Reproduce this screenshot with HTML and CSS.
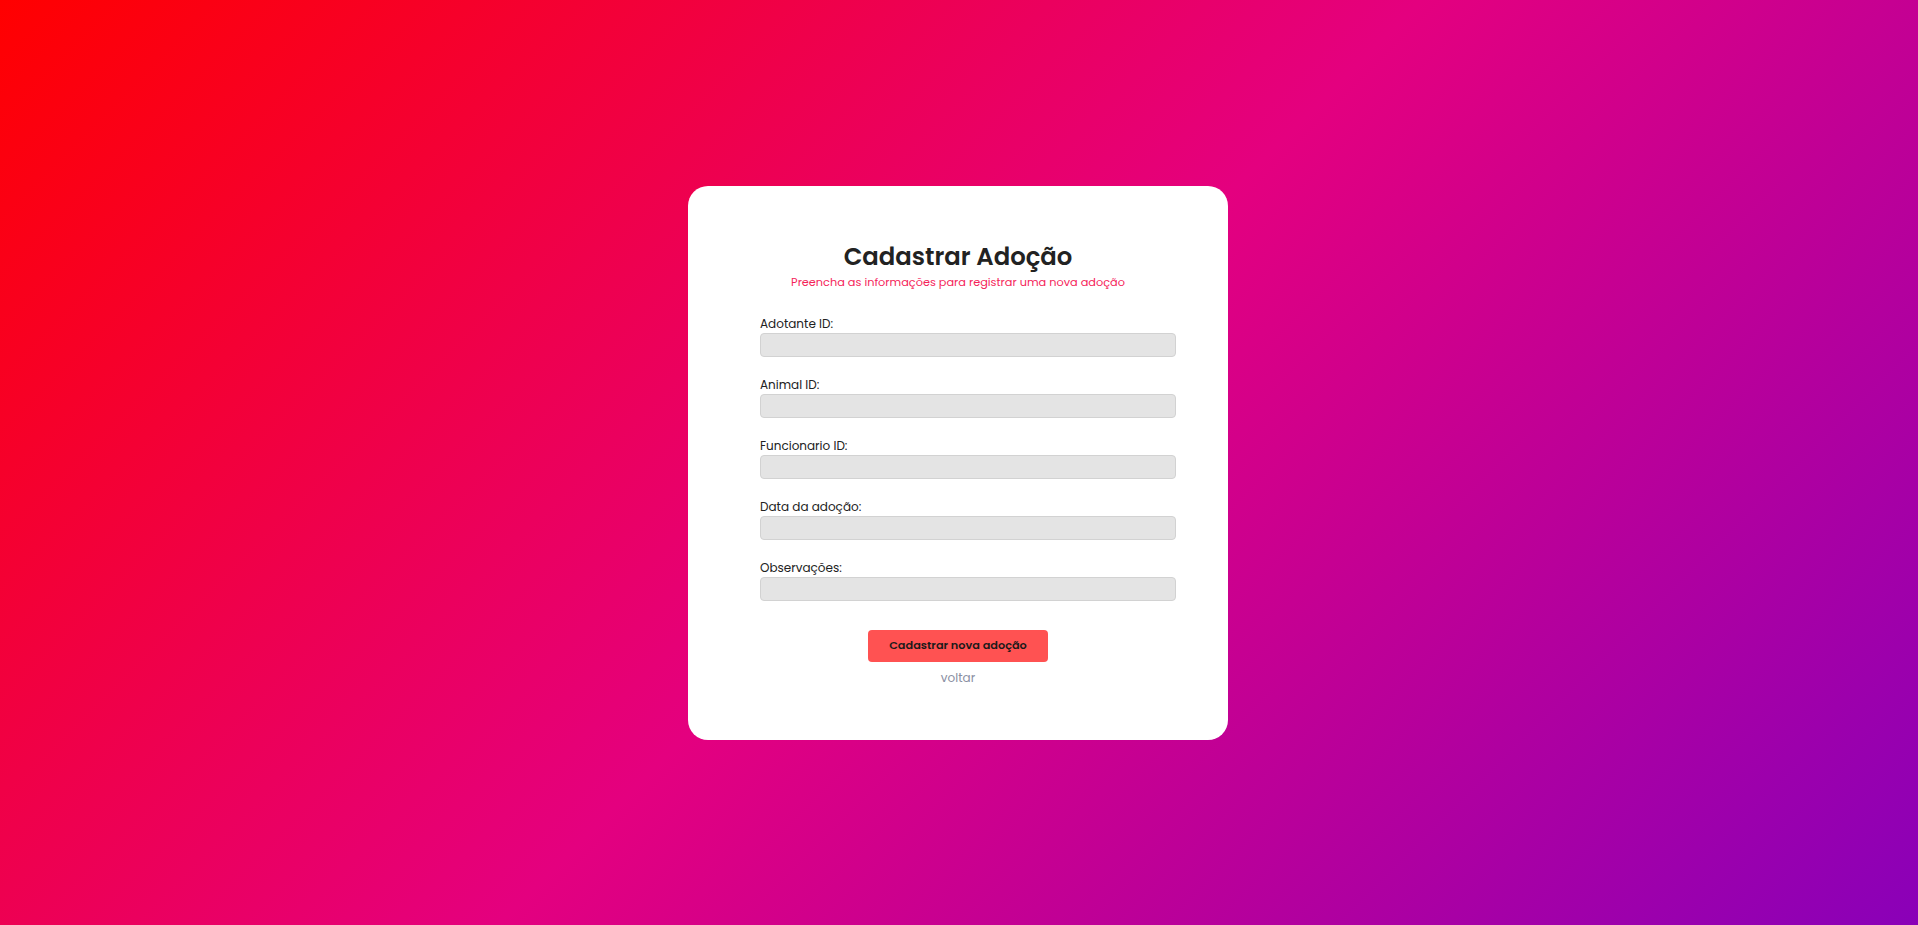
FILE: index.html
```html
<!DOCTYPE html>
<html lang="pt-BR">
<head>
<meta charset="utf-8">
<title>Cadastrar Adoção</title>
<link rel="stylesheet" href="styles.css">
</head>
<body>
  <main class="card">
    <h1 class="title">Cadastrar Adoção</h1>
    <p class="subtitle">Preencha as informações para registrar uma nova adoção</p>
    <form class="form">
      <div class="field">
        <label class="label" for="adotante">Adotante ID:</label>
        <input class="input" id="adotante" type="text">
      </div>
      <div class="field">
        <label class="label" for="animal">Animal ID:</label>
        <input class="input" id="animal" type="text">
      </div>
      <div class="field">
        <label class="label" for="funcionario">Funcionario ID:</label>
        <input class="input" id="funcionario" type="text">
      </div>
      <div class="field">
        <label class="label" for="data">Data da adoção:</label>
        <input class="input" id="data" type="text">
      </div>
      <div class="field">
        <label class="label" for="obs">Observações:</label>
        <input class="input" id="obs" type="text">
      </div>
      <div class="actions">
        <button class="button" type="button">Cadastrar nova adoção</button>
        <a class="back" href="#">voltar</a>
      </div>
    </form>
  </main>
</body>
</html>
```

FILE: styles.css
```css
* {
  box-sizing: border-box;
}

html, body {
  margin: 0;
  height: 100%;
}

body {
  font-family: "Poppins", "Inter", "Liberation Sans", sans-serif;
  background: linear-gradient(135deg, #ff0000 0%, #e4007f 50%, #8a00b8 100%);
  display: flex;
  align-items: center;
  justify-content: center;
  padding-right: 2px;
  color: #222;
}

.card {
  width: 540px;
  background: #ffffff;
  border-radius: 20px;
  padding: 56px 72px 53px;
  display: flex;
  flex-direction: column;
  align-items: stretch;
}

.title {
  margin: 0;
  font-size: 24.3px;
  line-height: 30px;
  font-weight: 600;
  text-align: center;
  color: #222;
}

.subtitle {
  margin: 2px 0 0;
  font-size: 11.3px;
  line-height: 17px;
  text-align: center;
  color: #f5245a;
}

.form {
  margin-top: 24px;
  display: flex;
  flex-direction: column;
  gap: 19px;
}

.field {
  display: flex;
  flex-direction: column;
}

.label {
  font-size: 12px;
  line-height: 18px;
  font-weight: 400;
  color: #222;
}

.input {
  box-sizing: content-box;
  width: 100%;
  height: 22px;
  padding: 0 9px;
  margin: 0;
  border: 1px solid #d2d2d2;
  border-radius: 4px;
  background: #e4e4e4;
  font: inherit;
}

.actions {
  margin-top: 10px;
  display: flex;
  flex-direction: column;
  align-items: center;
  gap: 7px;
}

.button {
  width: 180px;
  height: 32px;
  border: none;
  border-radius: 4px;
  background: #ff5252;
  color: #1a1a1a;
  font-family: inherit;
  font-size: 11.3px;
  font-weight: 600;
  cursor: pointer;
}

.back {
  font-size: 12px;
  line-height: 18px;
  color: #8a8fa3;
  text-decoration: none;
}
```
